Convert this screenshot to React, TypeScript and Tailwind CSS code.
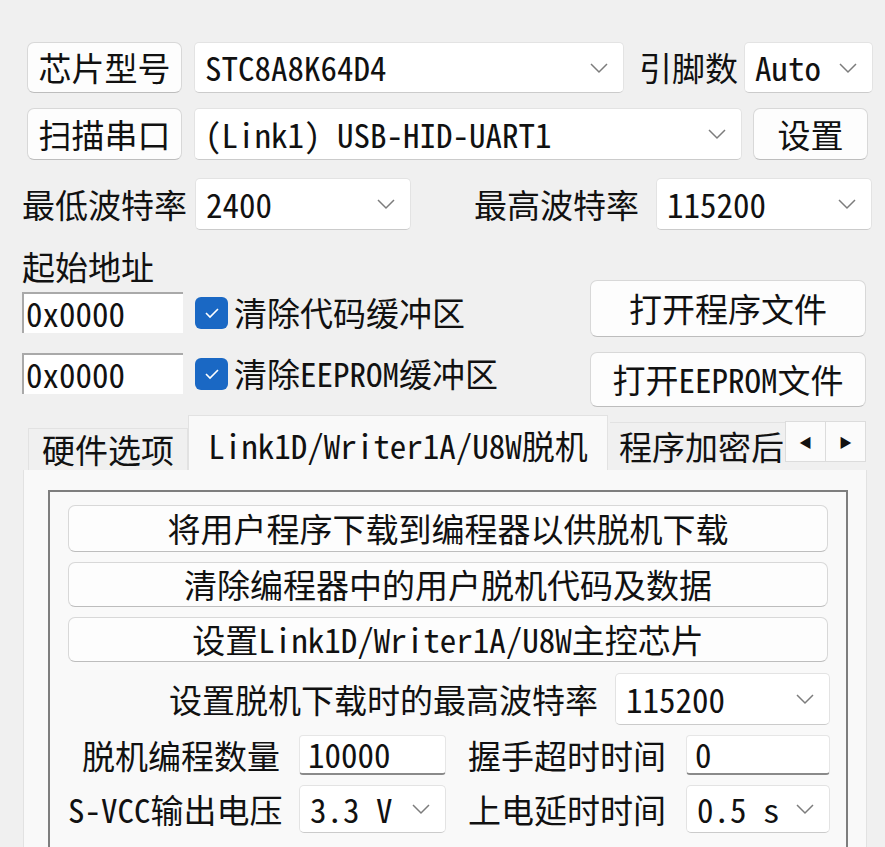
import type { ReactNode } from "react";

const font = "font-['Noto_Sans_Mono_CJK_SC','Noto_Sans_CJK_SC',sans-serif]";

function Chevron() {
  return (
    <svg width="20" height="12" viewBox="0 0 20 12" className="shrink-0">
      <path d="M2 2 L10 10 L18 2" fill="none" stroke="#7c7c7c" strokeWidth="1.5" />
    </svg>
  );
}

function Btn({ children, className = "" }: { children: ReactNode; className?: string }) {
  return (
    <div
      className={`flex shrink-0 items-center justify-center whitespace-nowrap rounded-[7px] border border-[#d8d8d8] border-b-[#bdbdbd] bg-[#fdfdfd] ${className}`}
    >
      {children}
    </div>
  );
}

function Combo({ text, className = "" }: { text: string; className?: string }) {
  return (
    <div
      className={`flex shrink-0 items-center justify-between whitespace-nowrap rounded-[5px] border border-[#e3e3e3] border-b-[#cbcbcb] bg-white pl-[10px] pr-[14px] ${className}`}
    >
      <span>{text}</span>
      <Chevron />
    </div>
  );
}

function Check({ label }: { label: string }) {
  return (
    <div className="ml-[12px] flex items-center whitespace-nowrap">
      <div className="flex h-[32px] w-[33px] items-center justify-center rounded-[6px] bg-[#1a68c4]">
        <svg width="18" height="14" viewBox="0 0 18 14">
          <path d="M3 7 L7 11 L15 3" fill="none" stroke="#ffffff" strokeWidth="1.6" />
        </svg>
      </div>
      <span className="ml-[6px]">{label}</span>
    </div>
  );
}

function AddrInput() {
  return (
    <div className="flex h-[41px] w-[161px] shrink-0 items-center border-l-2 border-t-2 border-[#a9a9a9] bg-white pl-[2px]">
      0x0000
    </div>
  );
}

function EditBox({ text, className = "" }: { text: string; className?: string }) {
  return (
    <div
      className={`flex h-full shrink-0 items-center rounded-[4px] border border-[#e6e6e6] border-b-2 border-b-[#8a8a8a] bg-white pl-[8px] ${className}`}
    >
      {text}
    </div>
  );
}

export default function App() {
  return (
    <div className={`${font} h-[847px] w-[885px] overflow-hidden whitespace-nowrap bg-[#f0f0f0] text-[33px] leading-none text-[#111]`}>
      {/* chip + pins */}
      <div className="mt-[42px] flex h-[51px] items-center pl-[27px]">
        <Btn className="h-full w-[155px]">芯片型号</Btn>
        <Combo text="STC8A8K64D4" className="ml-[12px] h-full w-[430px]" />
        <span className="ml-[15px]">引脚数</span>
        <Combo text="Auto" className="ml-[6px] h-full w-[129px] pl-[8px]" />
      </div>

      {/* serial port */}
      <div className="mt-[15px] flex h-[52px] items-center pl-[27px]">
        <Btn className="h-full w-[155px]">扫描串口</Btn>
        <Combo text="(Link1) USB-HID-UART1" className="ml-[12px] h-full w-[548px]" />
        <Btn className="ml-[11px] h-full w-[115px]">设置</Btn>
      </div>

      {/* baud rates */}
      <div className="mt-[18px] flex h-[52px] items-center pl-[22px]">
        <span>最低波特率</span>
        <Combo text="2400" className="ml-[8px] h-full w-[216px] pl-[6px]" />
        <span className="ml-[63px]">最高波特率</span>
        <Combo text="115200" className="ml-[17px] h-full w-[216px]" />
      </div>

      {/* start address + files */}
      <div className="mt-[20px] flex pl-[22px] pr-[19px]">
        <div className="flex flex-1 flex-col">
          <span className="h-[33px]">起始地址</span>
          <div className="mt-[9px] flex items-center">
            <AddrInput />
            <Check label="清除代码缓冲区" />
          </div>
          <div className="mt-[20px] flex items-center">
            <AddrInput />
            <Check label="清除EEPROM缓冲区" />
          </div>
        </div>
        <div className="flex w-[276px] flex-col pt-[30px]">
          <Btn className="h-[57px]">打开程序文件</Btn>
          <Btn className="mt-[15px] h-[55px]">打开EEPROM文件</Btn>
        </div>
      </div>

      {/* tabs */}
      <div className="mt-[8px] flex h-[55px] items-end pl-[28px]">
        <div className="flex h-[42px] w-[160px] shrink-0 items-center justify-center border border-b-0 border-[#e2e2e2] bg-[#f0f0f0]">
          硬件选项
        </div>
        <div className="flex h-[55px] w-[420px] shrink-0 items-center justify-center border border-b-0 border-[#e2e2e2] bg-[#f9f9f9] pt-[4px]">
          Link1D/Writer1A/U8W脱机
        </div>
        <div className="ml-[2px] flex h-[48px] w-[175px] shrink-0 items-center overflow-hidden border-t border-[#e2e2e2] bg-[#f0f0f0] pl-[9px]">
          程序加密后
        </div>
        <div className="mb-[8px] flex h-[41px] w-[81px] shrink-0 border border-[#dcdcdc] bg-[#fbfbfb] text-[13px]">
          <div className="flex flex-1 items-center justify-center border-r border-[#dcdcdc]">◀</div>
          <div className="flex flex-1 items-center justify-center">▶</div>
        </div>
      </div>

      {/* tab panel */}
      <div className="ml-[23px] mr-[18px] h-[400px] border-x border-[#e2e2e2] bg-[#f9f9f9] pl-[24px] pr-[18px] pt-[20px]">
        <div className="h-[400px] border-2 border-[#7e7e7e] px-[18px] pt-[13px]">
          <Btn className="h-[47px]">将用户程序下载到编程器以供脱机下载</Btn>
          <Btn className="mt-[10px] h-[45px]">清除编程器中的用户脱机代码及数据</Btn>
          <Btn className="mt-[10px] h-[45px]">设置Link1D/Writer1A/U8W主控芯片</Btn>

          <div className="mr-[-2px] mt-[11px] flex h-[52px] items-center justify-end">
            <span>设置脱机下载时的最高波特率</span>
            <Combo text="115200" className="ml-[17px] h-full w-[215px]" />
          </div>

          <div className="mt-[10px] flex h-[40px] items-center">
            <span className="w-[212px] shrink-0 text-right">脱机编程数量</span>
            <EditBox text="10000" className="ml-[19px] w-[147px]" />
            <span className="ml-[22px] w-[198px] shrink-0">握手超时时间</span>
            <EditBox text="0" className="ml-[20px] w-[144px]" />
          </div>

          <div className="mt-[10px] flex h-[48px] items-center">
            <span className="w-[212px] shrink-0 text-right">S-VCC输出电压</span>
            <Combo text="3.3 V" className="ml-[19px] h-full w-[147px] pl-[8px] pr-[10px]" />
            <span className="ml-[22px] w-[198px] shrink-0">上电延时时间</span>
            <Combo text="0.5 s" className="ml-[20px] h-full w-[144px] pl-[8px] pr-[10px]" />
          </div>
        </div>
      </div>
    </div>
  );
}
